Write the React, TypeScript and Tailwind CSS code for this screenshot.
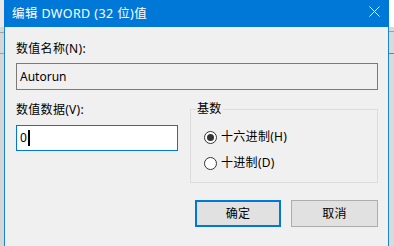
import React from "react";

const font = { fontFamily: '"Noto Sans", "Noto Sans CJK SC", sans-serif' };

function Radio({ checked, label }: { checked: boolean; label: string }) {
  return (
    <div className="flex items-center h-[16px]">
      <div className="w-[13px] h-[13px] rounded-full border border-[#333333] bg-white flex items-center justify-center">
        {checked && <div className="w-[7px] h-[7px] rounded-full bg-[#333333]" />}
      </div>
      <span className="ml-[4px] text-[12px] leading-[16px] tracking-[0.3px] text-black">{label}</span>
    </div>
  );
}

export default function App() {
  return (
    <div
      className="flex w-[394px] h-[246px] overflow-hidden bg-[#f0f0f0]"
      style={font}
    >
      <div className="w-[4px] h-full flex flex-col bg-[#d6d6d6]">
        <div className="h-[27px] bg-[#e8e8e8]" />
        <div className="h-px bg-[#a0a0a0] mt-[5px]" />
        <div className="h-px bg-[#a0a0a0] mt-[20px]" />
      </div>
      <div className="w-[385px] h-full flex flex-col border-x border-[#1883d7] bg-[#f0f0f0]">
        <div className="h-[27px] bg-[#0078d7] flex items-center justify-between pl-[8px] pr-[9px] -mx-px">
          <span className="text-white text-[12.5px] leading-[16px] tracking-[0.4px]">编辑 DWORD (32 位)值</span>
          <svg width="11" height="11" viewBox="0 0 11 11" className="mb-[5px]">
            <path d="M0.5 0.5 L10.5 10.5 M10.5 0.5 L0.5 10.5" stroke="white" strokeWidth="1" fill="none" />
          </svg>
        </div>
        <div className="flex flex-col pl-[11px]">
          <div className="mt-[14px] text-[12px] leading-[16px] tracking-[0.3px] text-black">数值名称(N):</div>
          <div className="mt-[6px] w-[362px] h-[27px] border border-[#7a7a7a] bg-[#f0f0f0] flex items-center pl-[3px] text-[12px] text-black">
            Autorun
          </div>
          <div className="flex mt-[11px]">
            <div className="w-[162px] flex flex-col">
              <div className="mt-[1px] text-[12px] leading-[16px] tracking-[0.3px] text-black">数值数据(V):</div>
              <div className="mt-[7px] w-[162px] h-[26px] border border-[#0078d7] bg-white flex items-center pl-[3px] text-[12px] text-black">
                <span>0</span>
                <span className="w-[2px] h-[16px] bg-black ml-[1px]" />
              </div>
            </div>
            <fieldset className="ml-[12px] w-[188px] h-[82px] border border-[#dcdcdc] pl-[5px] m-0">
              <legend className="px-[1px] text-[12px] leading-[16px] tracking-[0.3px] text-black">基数</legend>
              <div className="pl-[8px] mt-[12px] flex flex-col gap-[10px]">
                <Radio checked label="十六进制(H)" />
                <Radio checked={false} label="十进制(D)" />
              </div>
            </fieldset>
          </div>
          <div className="flex mt-[17px] ml-[179px] gap-[10px]">
            <div className="w-[86px] h-[27px] border-2 border-[#0078d7] bg-[#e1e1e1] flex items-center justify-center text-[12px] tracking-[0.3px] text-black">
              确定
            </div>
            <div className="w-[87px] h-[27px] border border-[#adadad] bg-[#e1e1e1] flex items-center justify-center text-[12px] tracking-[0.3px] text-black">
              取消
            </div>
          </div>
        </div>
      </div>
      <div className="w-[5px] h-full flex flex-col bg-[#dadada]">
        <div className="h-[27px] bg-white" />
        <div className="h-px bg-[#a0a0a0] mt-[4px]" />
        <div className="h-px bg-[#808080] mt-[21px]" />
      </div>
    </div>
  );
}
